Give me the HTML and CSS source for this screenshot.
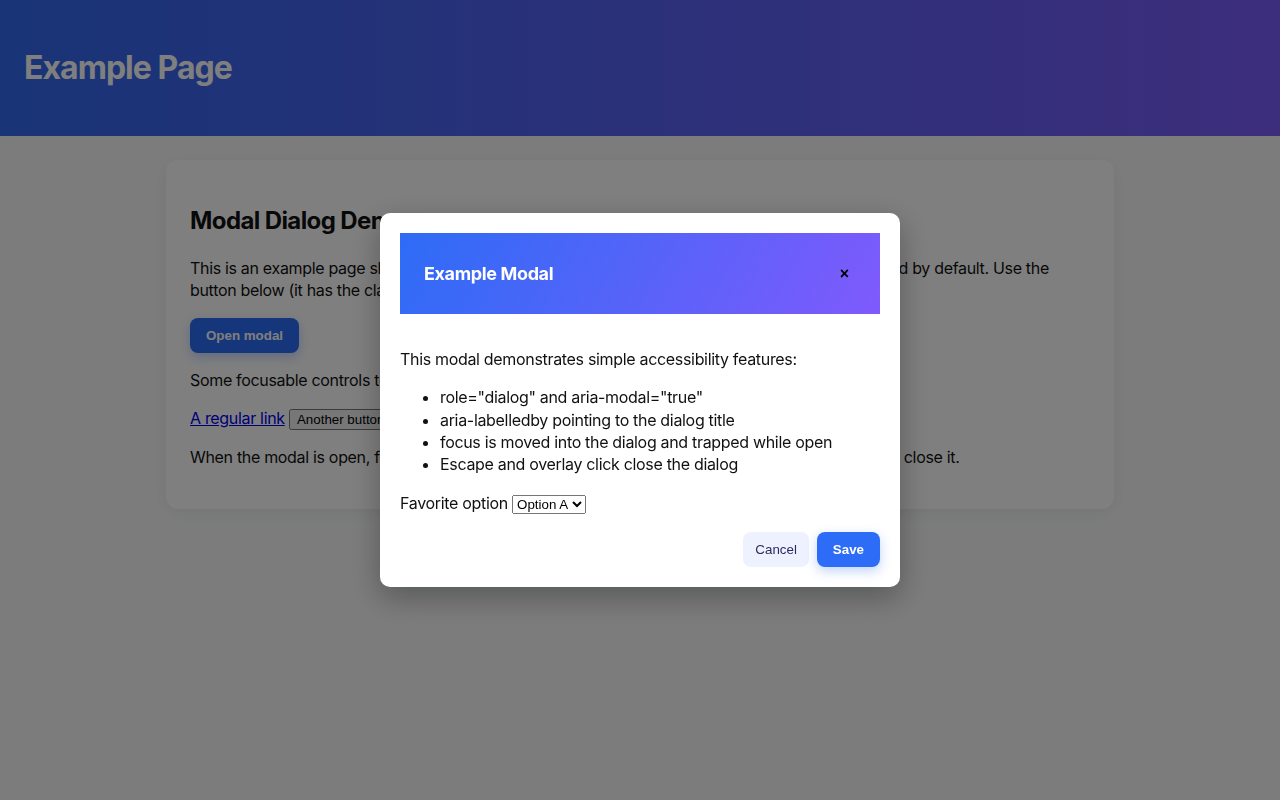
FILE: index.html
```html
<!DOCTYPE html>
<html lang="en">
<head>
<meta charset="utf-8">
<title>Example Page</title>
<link rel="stylesheet" href="styles.css">
</head>
<body>
<header class="site-header">
  <h1 class="site-title">Example Page</h1>
</header>
<main class="container">
  <section class="card">
    <h2 class="card-title">Modal Dialog Demo</h2>
    <p>This is an example page showing an accessible, keyboard-friendly modal dialogue, which is closed by default. Use the button below (it has the class "open-modal") to open it.</p>
    <p><button class="btn btn-primary open-modal" type="button">Open modal</button></p>
    <p>Some focusable controls to test focus trapping:</p>
    <p><a href="#">A regular link</a> <button type="button" class="plain-btn">Another button</button></p>
    <p>When the modal is open, focus is trapped inside of the modal. Press Escape or click the overlay to close it.</p>
  </section>
</main>

<div class="overlay">
  <div class="modal" role="dialog" aria-modal="true" aria-labelledby="modal-title">
    <div class="modal-header">
      <h3 id="modal-title" class="modal-title">Example Modal</h3>
      <button class="modal-close" type="button" aria-label="Close">×</button>
    </div>
    <div class="modal-body">
      <p>This modal demonstrates simple accessibility features:</p>
      <ul>
        <li>role="dialog" and aria-modal="true"</li>
        <li>aria-labelledby pointing to the dialog title</li>
        <li>focus is moved into the dialog and trapped while open</li>
        <li>Escape and overlay click close the dialog</li>
      </ul>
      <p><label>Favorite option <select><option>Option A</option><option>Option B</option></select></label></p>
    </div>
    <div class="modal-footer">
      <button class="btn btn-secondary" type="button">Cancel</button>
      <button class="btn btn-primary" type="button">Save</button>
    </div>
  </div>
</div>
</body>
</html>
```

FILE: styles.css
```css
* { box-sizing: border-box; }

html, body {
  margin: 0;
  padding: 0;
}

body {
  font-family: Inter, "Liberation Sans", Arial, sans-serif;
  font-size: 16px;
  line-height: 1.4;
  letter-spacing: -0.02em;
  color: #111;
  background: #f8f9fa;
  min-height: 800px;
}

.site-header {
  background: linear-gradient(90deg, #3268ee, #7a5cf8);
  padding: 48px 24px;
}

.site-title {
  margin: 0;
  font-size: 32px;
  line-height: 40px;
  font-weight: 700;
  letter-spacing: -0.03em;
  color: #fff;
}

.container {
  max-width: 948px;
  margin: 24px auto 0;
}

.card {
  background: #fff;
  border-radius: 12px;
  padding: 24px;
  box-shadow: 0 4px 16px rgba(0, 0, 0, 0.06);
}

.card-title {
  font-size: 24px;
  line-height: 29px;
  margin: 22px 0 22px;
  letter-spacing: -0.025em;
}

.card p {
  margin: 16px 0;
}

a { color: #0000ee; }

.btn {
  font-family: "Liberation Sans", Arial, sans-serif;
  font-size: 13.333px;
  line-height: 15px;
  border: 0;
  border-radius: 8px;
  padding: 10px 16px;
  cursor: pointer;
}

.btn-primary {
  background: #2d6cf6;
  color: #fff;
  font-weight: 700;
  box-shadow: 0 4px 12px rgba(45, 108, 246, 0.3);
}

.btn-secondary {
  background: #eef2ff;
  color: #2e2a5e;
  padding: 10px 12px;
}

.plain-btn {
  font-family: "Liberation Sans", Arial, sans-serif;
  font-size: 13.333px;
}

.overlay {
  position: fixed;
  inset: 0;
  background: rgba(0, 0, 0, 0.5);
  display: flex;
  align-items: center;
  justify-content: center;
}

.modal {
  width: 520px;
  background: #fff;
  border-radius: 10px;
  padding: 20px;
  box-shadow: 0 10px 30px rgba(0, 0, 0, 0.3);
}

.modal-header {
  background: linear-gradient(120deg, #2d6cf6, #7f5afc);
  display: flex;
  align-items: center;
  justify-content: space-between;
  padding: 28px 24px;
}

.modal-title {
  margin: 0;
  font-size: 18px;
  line-height: 25px;
  font-weight: 700;
  letter-spacing: -0.02em;
  color: #fff;
}

.modal-close {
  background: transparent;
  border: 0;
  padding: 0 7px;
  font-family: "Liberation Sans", Arial, sans-serif;
  font-size: 16px;
  font-weight: 700;
  line-height: 25px;
  color: #000;
  cursor: pointer;
}

.modal-body {
  padding-top: 18px;
}

.modal-body p {
  margin: 16px 0;
}

.modal-body ul {
  margin: 16px 0;
  padding-left: 40px;
}

.modal-body select {
  font-family: "Liberation Sans", Arial, sans-serif;
  font-size: 13.333px;
}

.modal-footer {
  display: flex;
  justify-content: flex-end;
  gap: 8px;
  padding-top: 2px;
}
```
